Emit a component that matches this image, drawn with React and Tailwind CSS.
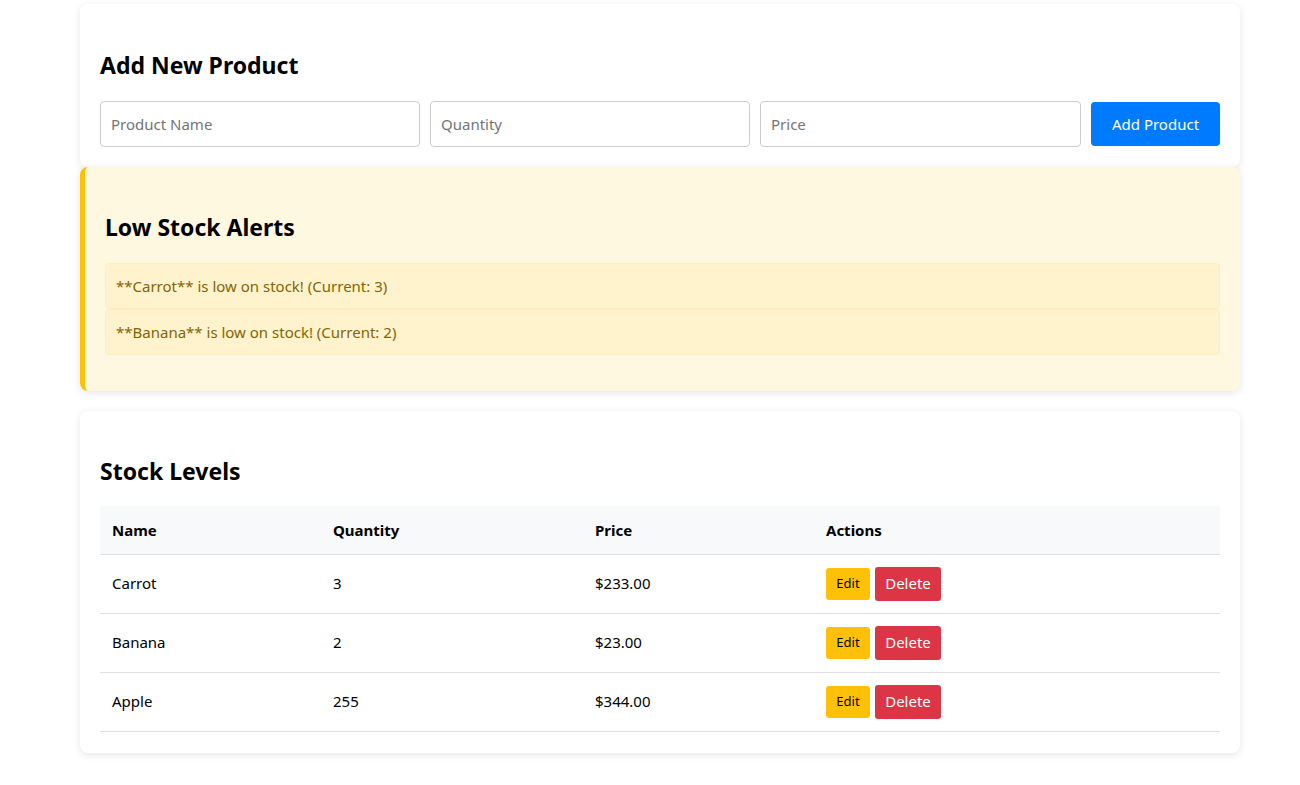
import React from "react";

const products = [
  { name: "Carrot", quantity: 3, price: 233 },
  { name: "Banana", quantity: 2, price: 23 },
  { name: "Apple", quantity: 255, price: 344 },
];

const LOW_STOCK = 5;

const Card = ({ className = "", children }) => (
  <div
    className={`rounded-lg shadow-[0_2px_8px_rgba(0,0,0,0.1)] ${className}`}
  >
    {children}
  </div>
);

export default function App() {
  const lowStock = products.filter((p) => p.quantity < LOW_STOCK);

  return (
    <div
      className="min-h-screen bg-white text-black"
      style={{ fontFamily: '"Noto Sans", "Open Sans", sans-serif' }}
    >
      <div className="ml-[80px] w-[1160px] pt-[4px]">
        <Card className="bg-white px-5 pt-[45px] pb-5">
          <h2 className="text-[23px] leading-8 font-bold">Add New Product</h2>
          <div className="mt-5 flex gap-[10px]">
            <input
              placeholder="Product Name"
              className="h-[46px] w-[320px] rounded border border-[#cccccc] px-[10px] text-[15px] placeholder:text-[#757575] outline-none"
            />
            <input
              placeholder="Quantity"
              className="h-[46px] w-[320px] rounded border border-[#cccccc] px-[10px] text-[15px] placeholder:text-[#757575] outline-none"
            />
            <input
              placeholder="Price"
              className="h-[46px] w-[321px] rounded border border-[#cccccc] px-[10px] text-[15px] placeholder:text-[#757575] outline-none"
            />
            <button
              type="button"
              className="mt-px h-[44px] w-[129px] rounded bg-[#007bff] text-[15px] text-white"
            >
              Add Product
            </button>
          </div>
        </Card>

        <Card className="border-l-[5px] border-[#ffc107] bg-[#fff8e1] pl-5 pr-5 pt-[44px] pb-[36px]">
          <h2 className="text-[23px] leading-8 font-bold">Low Stock Alerts</h2>
          <div className="mt-5">
            {lowStock.map((p) => (
              <div
                key={p.name}
                className="h-[46px] rounded border border-[#ffeeba] bg-[#fff3cd] px-[10px] text-[15px] leading-[44px] text-[#856404]"
              >
                **{p.name}** is low on stock! (Current: {p.quantity})
              </div>
            ))}
          </div>
        </Card>

        <Card className="mt-5 bg-white px-5 pt-[44px] pb-[21px]">
          <h2 className="text-[23px] leading-8 font-bold">Stock Levels</h2>
          <table className="mt-[19px] w-full border-collapse text-left text-[15px]">
            <thead>
              <tr className="h-[48px] border-b border-[#dee2e6] bg-[#f8f9fa]">
                <th className="w-[221px] px-3 font-bold">Name</th>
                <th className="w-[262px] px-3 font-bold">Quantity</th>
                <th className="w-[231px] px-3 font-bold">Price</th>
                <th className="px-3 font-bold">Actions</th>
              </tr>
            </thead>
            <tbody>
              {products.map((p) => (
                <tr key={p.name} className="h-[59px] border-b border-[#dee2e6]">
                  <td className="px-3">{p.name}</td>
                  <td className="px-3">{p.quantity}</td>
                  <td className="px-3">${p.price.toFixed(2)}</td>
                  <td className="px-3">
                    <div className="flex items-center gap-[5px]">
                      <button
                        type="button"
                        className="h-[32px] w-[44px] rounded-[3px] bg-[#ffc107] text-[13px] text-black"
                      >
                        Edit
                      </button>
                      <button
                        type="button"
                        className="h-[34px] w-[66px] rounded-[3px] bg-[#dc3545] text-[15px] text-white"
                      >
                        Delete
                      </button>
                    </div>
                  </td>
                </tr>
              ))}
            </tbody>
          </table>
        </Card>
      </div>
    </div>
  );
}
